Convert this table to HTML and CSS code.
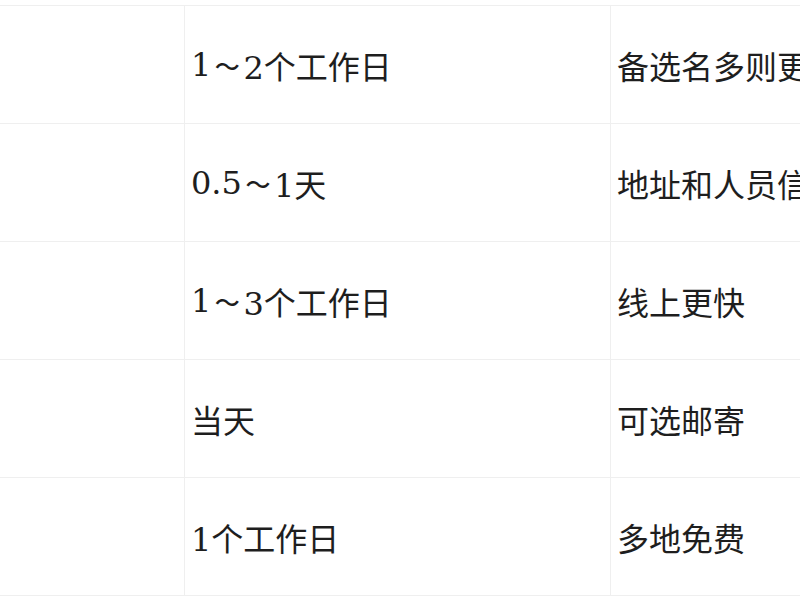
FILE: index.html
```html
<!DOCTYPE html>
<html lang="zh-CN">
<head>
<meta charset="utf-8">
<link rel="stylesheet" href="styles.css">
</head>
<body>
<div class="table">
  <div class="row"><div class="cell"></div><div class="cell">1<span class="tilde">～</span>2个工作日</div><div class="cell">备选名多则更快</div></div>
  <div class="row"><div class="cell"></div><div class="cell">0.5<span class="tilde">～</span>1天</div><div class="cell">地址和人员信息</div></div>
  <div class="row"><div class="cell"></div><div class="cell">1<span class="tilde">～</span>3个工作日</div><div class="cell">线上更快</div></div>
  <div class="row"><div class="cell"></div><div class="cell">当天</div><div class="cell">可选邮寄</div></div>
  <div class="row last"><div class="cell"></div><div class="cell">1个工作日</div><div class="cell">多地免费</div></div>
</div>
</body>
</html>
```
FILE: styles.css
```css
html, body {
  margin: 0;
  padding: 0;
  background: #ffffff;
  overflow: hidden;
}
body {
  width: 800px;
  height: 600px;
  font-family: "DejaVu Serif", "Noto Sans CJK SC", serif;
  font-size: 32px;
  color: #1e1e1e;
}
.table {
  padding-top: 5px;
  width: 1000px;
}
.row {
  display: grid;
  grid-template-columns: 184px 426px 390px;
  height: 118px;
  box-sizing: border-box;
  border-top: 1px solid #efefef;
}
.row.last {
  height: 119px;
  border-bottom: 1px solid #efefef;
}
.cell {
  display: flex;
  align-items: center;
  padding-left: 6px;
  white-space: nowrap;
  box-sizing: border-box;
}
.cell + .cell {
  border-left: 1px solid #efefef;
}
.tilde {
  font-family: "Noto Sans CJK SC", sans-serif;
  font-size: 25px;
  font-weight: 500;
  padding: 0 3.5px;
}
```
